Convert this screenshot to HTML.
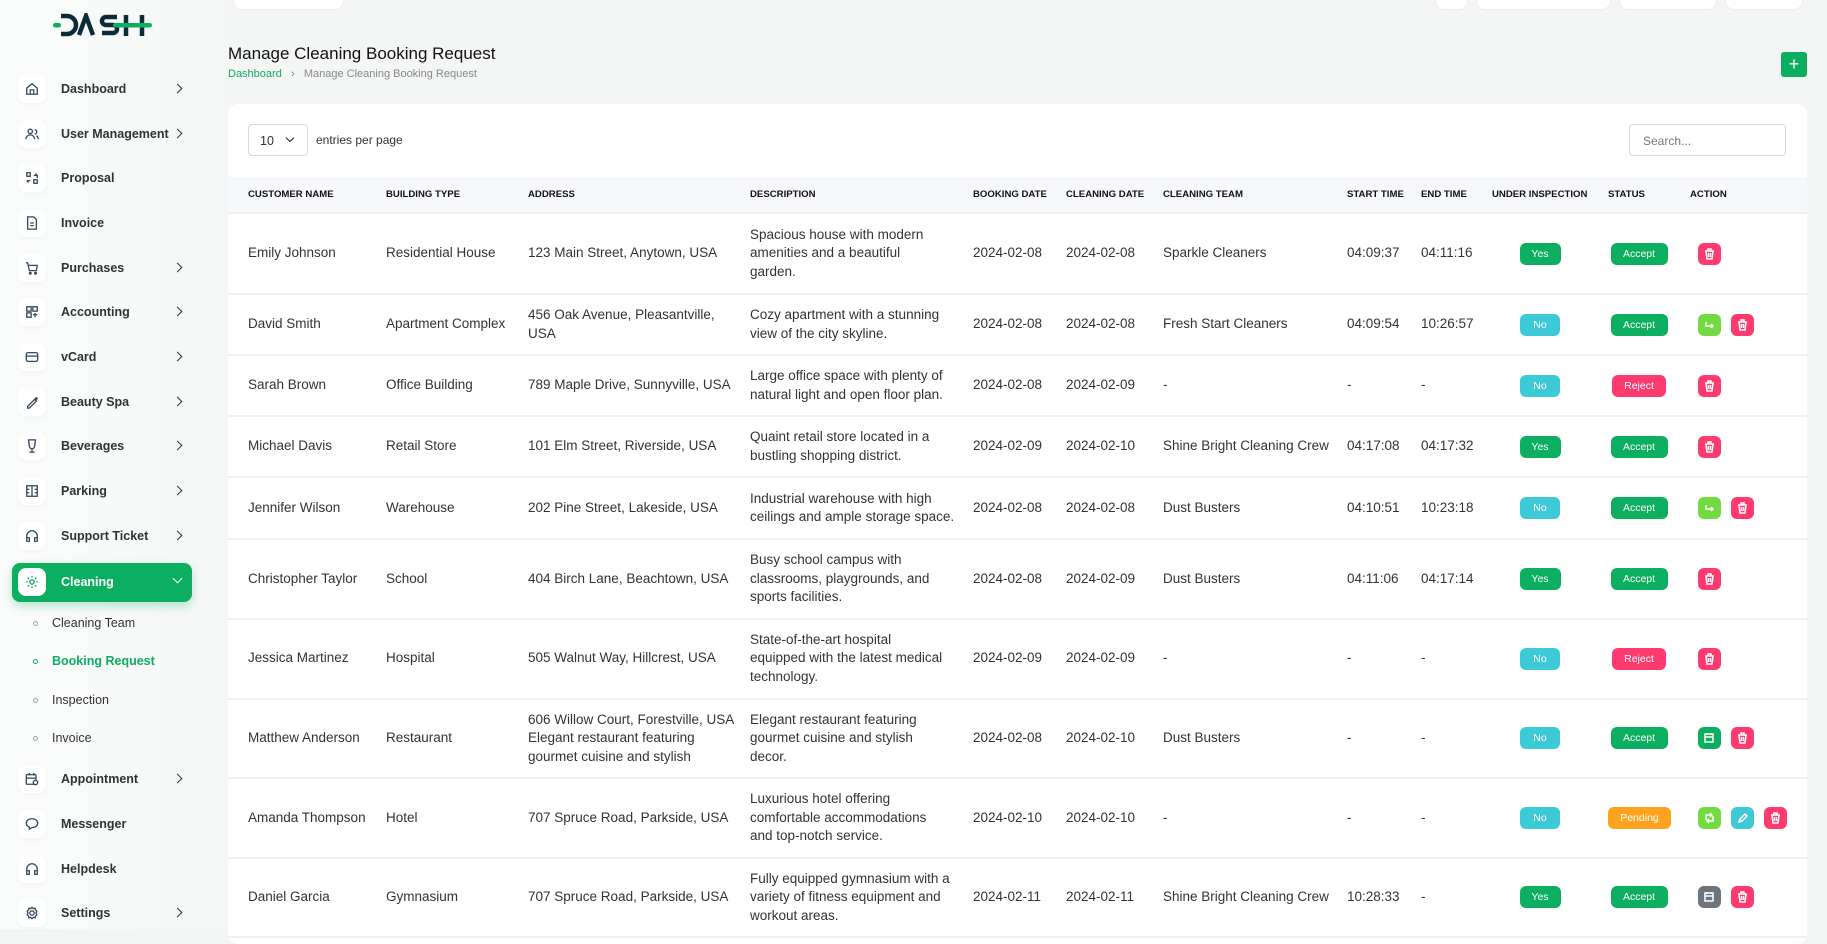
<!DOCTYPE html>
<html><head><meta charset="utf-8">
<style>
*{box-sizing:border-box;margin:0;padding:0}
body{width:1827px;height:929px;overflow:hidden;background:#f4f6f6;font-family:"Liberation Sans",sans-serif;color:#333;position:relative}
.sb{position:absolute;left:0;top:0;width:228px;height:929px;background:linear-gradient(90deg,#fbfcfc,#f5f7f7)}
.logo{position:absolute;left:52px;top:13px;width:100px;height:24px}
.it{position:absolute;left:18px;height:28px;display:flex;align-items:center;font-size:12.5px;font-weight:bold;color:#2d3436;width:170px}
.ib{width:28px;height:28px;background:#fff;border-radius:8px;display:flex;align-items:center;justify-content:center;box-shadow:0 2px 6px rgba(0,0,0,.03);margin-right:15px;flex:none}
.ib svg{width:14px;height:14px;fill:none;stroke:#34495e;stroke-width:1.5}
.chev{position:absolute;left:156px;top:10px;width:7px;height:7px;border-right:1.5px solid #333;border-top:1.5px solid #333;transform:rotate(45deg)}
.act{position:absolute;left:12px;top:563px;width:180px;height:39px;background:#0caf60;border-radius:8px;box-shadow:0 4px 10px rgba(12,175,96,.3)}
.sub{position:absolute;left:33px;font-size:12.5px;color:#333;display:flex;align-items:center}
.sub i{width:5px;height:5px;border:1.2px solid #9aa;border-radius:50%;margin-right:14px;display:inline-block}
.top{position:absolute;top:0;height:10px;background:#fff;border-radius:0 0 9px 9px;border:1px solid #eceeee;border-top:0}
h1{position:absolute;left:228px;top:44px;font-size:17px;font-weight:normal;color:#111}
.bc{position:absolute;left:228px;top:68px;font-size:11px;color:#888}
.bc span{color:#0caf60}
.plus{position:absolute;left:1781px;top:52px;width:26px;height:25px;background:#0caf60;border-radius:3px;color:#fff;text-align:center;font-size:18px;line-height:24px}
.card{position:absolute;left:228px;top:104px;width:1579px;height:840px;background:#fff;border-radius:10px}
.sel{position:absolute;left:20px;top:20px;width:60px;height:32px;border:1px solid #d5d8dc;border-radius:4px;font-size:12.5px;padding:9px 11px}
.sel:after{content:"";position:absolute;left:38px;top:10px;width:5px;height:5px;border-right:1.6px solid #222;border-bottom:1.6px solid #222;transform:rotate(45deg)}
.epp{position:absolute;left:88px;top:29px;font-size:12px;color:#333}
.srch{position:absolute;left:1401px;top:20px;width:157px;height:32px;border:1px solid #d5d8dc;border-radius:4px;font-size:12px;color:#777;padding:9px 13px}
table{position:absolute;left:0;top:73px;border-collapse:collapse;table-layout:fixed;width:1579px}
th{background:#f6f8fc;height:36px;font-size:9.6px;font-weight:bold;text-align:left;color:#111;padding:0 0 0 20px;white-space:nowrap;border-bottom:2px solid #eef0f2}
td{font-size:13.5px;line-height:18.5px;padding:11px 0 11px 20px;vertical-align:middle;border-bottom:2px solid #eef0f2;color:#333;white-space:nowrap;overflow:visible}
.c{text-align:center;padding-right:0}
.b{display:inline-block;height:22px;line-height:22px;border-radius:6px;color:#fff;font-size:10.5px;padding:0 6px}
.y{background:#0caf60;width:41px}.n{background:#3ec9d6;width:40px}
.ac{background:#0caf60;width:57px}.rj{background:#ff3a6e;width:54px}.pd{background:#ffa21d;width:63px}
.a{display:inline-block;width:23px;height:22px;border-radius:6px;margin-left:8px;margin-right:2px;vertical-align:middle;position:relative}
.a svg{position:absolute;left:6px;top:5px;width:11px;height:12px;fill:none;stroke:#fff;stroke-width:1.5}
.del{background:#ff3a6e}.sh{background:#72db41}.ed{background:#3ec9d6}.gr{background:#0caf60}.gy{background:#6c757d}
</style></head><body>
<div class="sb">
<svg class="logo" viewBox="0 0 100 24"><g fill="none" stroke="#0d2a38" stroke-width="4.5"><path d="M9 3h6a9 9 0 0 1 0 18H9"/><path d="M27 22l7-19 7 19"/><path d="M65 4H54a4 4 0 0 0 0 8h7a4 4 0 0 1 0 8H50"/><path d="M74 2v21M90 2v21"/></g><rect x="1" y="10" width="8" height="4.5" rx="2.2" fill="#0caf60"/><rect x="61" y="10" width="39" height="4.5" rx="2.2" fill="#0caf60"/></svg>

<div class="it" style="top:75px"><div class="ib"><svg viewBox="0 0 16 16"><path d="M2 7l6-5 6 5v7H2zM6 14v-5h4v5"/></svg></div>Dashboard<span class="chev"></span></div>
<div class="it" style="top:120px"><div class="ib"><svg viewBox="0 0 16 16"><circle cx="6" cy="5" r="2.5"/><path d="M1 14a5 5 0 0 1 10 0M11 3a2.5 2.5 0 0 1 0 5M13 10a4 4 0 0 1 2 4"/></svg></div>User Management<span class="chev"></span></div>
<div class="it" style="top:164px"><div class="ib"><svg viewBox="0 0 16 16"><rect x="2" y="2" width="4" height="4"/><rect x="10" y="10" width="4" height="4"/><path d="M10 5h4v3M2 11h4M12 3l2 2M4 13l-2-2"/></svg></div>Proposal</div>
<div class="it" style="top:209px"><div class="ib"><svg viewBox="0 0 16 16"><path d="M3 1h7l3 3v11H3zM6 8h4M6 11h4"/></svg></div>Invoice</div>
<div class="it" style="top:254px"><div class="ib"><svg viewBox="0 0 16 16"><path d="M1 2h2l2 9h8l1-6H4"/><circle cx="6" cy="14" r="1"/><circle cx="12" cy="14" r="1"/></svg></div>Purchases<span class="chev"></span></div>
<div class="it" style="top:298px"><div class="ib"><svg viewBox="0 0 16 16"><rect x="2" y="2" width="5" height="5"/><rect x="9" y="2" width="5" height="5"/><rect x="2" y="9" width="5" height="5"/><path d="M9 11h5M11.5 9v5"/></svg></div>Accounting<span class="chev"></span></div>
<div class="it" style="top:343px"><div class="ib"><svg viewBox="0 0 16 16"><rect x="1.5" y="3" width="13" height="10" rx="2"/><path d="M1.5 7h13"/></svg></div>vCard<span class="chev"></span></div>
<div class="it" style="top:388px"><div class="ib"><svg viewBox="0 0 16 16"><path d="M3 13l8-8 2 2-8 8H3zM11 5l2-2 1 1-2 2"/></svg></div>Beauty Spa<span class="chev"></span></div>
<div class="it" style="top:432px"><div class="ib"><svg viewBox="0 0 16 16"><path d="M4 1h8l-1 7a3 3 0 0 1-6 0zM8 11v4M5 15h6"/></svg></div>Beverages<span class="chev"></span></div>
<div class="it" style="top:477px"><div class="ib"><svg viewBox="0 0 16 16"><rect x="2" y="2" width="12" height="12"/><path d="M8 2v12M2 6h3M11 6h3M2 10h3M11 10h3"/></svg></div>Parking<span class="chev"></span></div>
<div class="it" style="top:522px"><div class="ib"><svg viewBox="0 0 16 16"><path d="M2 11V8a6 6 0 0 1 12 0v3M2 10h3v4H2zM11 10h3v4h-3z"/></svg></div>Support Ticket<span class="chev"></span></div>
<div class="act"></div>
<div class="it" style="top:568px;color:#fff"><div class="ib"><svg viewBox="0 0 16 16" style="stroke:#0caf60"><circle cx="8" cy="8" r="2.5"/><path d="M8 1v2M8 13v2M1 8h2M13 8h2M3 3l1.5 1.5M11.5 11.5L13 13M3 13l1.5-1.5M11.5 4.5L13 3"/></svg></div>Cleaning<span class="chev" style="border-color:#fff;transform:rotate(135deg);top:7px"></span></div>
<div class="sub" style="top:616px"><i></i>Cleaning Team</div>
<div class="sub" style="top:654px;color:#0caf60;font-weight:bold"><i style="border-color:#0caf60"></i>Booking Request</div>
<div class="sub" style="top:693px"><i></i>Inspection</div>
<div class="sub" style="top:731px"><i></i>Invoice</div>
<div class="it" style="top:765px"><div class="ib"><svg viewBox="0 0 16 16"><rect x="1.5" y="3" width="11" height="11" rx="1"/><path d="M1.5 7h11M5 1v3M10 1v3"/><circle cx="12" cy="12" r="2.5" fill="#fff"/></svg></div>Appointment<span class="chev"></span></div>
<div class="it" style="top:810px"><div class="ib"><svg viewBox="0 0 16 16"><path d="M8 2c4 0 6.5 2.2 6.5 5s-2.5 5-6.5 5l-3 2v-2.5C3 10.7 1.5 9 1.5 7 1.5 4.2 4 2 8 2z"/></svg></div>Messenger</div>
<div class="it" style="top:855px"><div class="ib"><svg viewBox="0 0 16 16"><path d="M2 11V8a6 6 0 0 1 12 0v3M2 10h3v4H2zM11 10h3v4h-3z"/></svg></div>Helpdesk</div>
<div class="it" style="top:899px"><div class="ib"><svg viewBox="0 0 16 16"><circle cx="8" cy="8" r="2.5"/><path d="M8 1.5l1.5 1.5 2-.5.5 2 1.5 1.5-1 2 1 2-1.5 1.5-.5 2-2-.5L8 14.5l-1.5-1.5-2 .5-.5-2L2.5 10l1-2-1-2L4 4.5l.5-2 2 .5z"/></svg></div>Settings<span class="chev"></span></div>
</div>

<div class="top" style="left:233px;width:111px"></div>
<div class="top" style="left:1435px;width:33px"></div>
<div class="top" style="left:1476px;width:135px"></div>
<div class="top" style="left:1619px;width:98px"></div>
<div class="top" style="left:1725px;width:78px"></div>

<h1>Manage Cleaning Booking Request</h1>
<div class="bc"><span>Dashboard</span> &nbsp;&nbsp;›&nbsp;&nbsp; Manage Cleaning Booking Request</div>
<div class="plus">+</div>

<div class="card">
<div class="sel">10</div><div class="epp">entries per page</div>
<div class="srch">Search...</div>
<table>
<colgroup><col style="width:138px"><col style="width:142px"><col style="width:222px"><col style="width:223px"><col style="width:93px"><col style="width:97px"><col style="width:184px"><col style="width:74px"><col style="width:71px"><col style="width:116px"><col style="width:82px"><col></colgroup>
<tr><th>CUSTOMER NAME</th><th>BUILDING TYPE</th><th>ADDRESS</th><th>DESCRIPTION</th><th>BOOKING DATE</th><th>CLEANING DATE</th><th>CLEANING TEAM</th><th>START TIME</th><th>END TIME</th><th>UNDER INSPECTION</th><th>STATUS</th><th>ACTION</th></tr>
<tr style="height:81px"><td>Emily Johnson</td><td>Residential House</td><td>123 Main Street, Anytown, USA</td><td>Spacious house with modern<br>amenities and a beautiful<br>garden.</td><td>2024-02-08</td><td>2024-02-08</td><td>Sparkle Cleaners</td><td>04:09:37</td><td>04:11:16</td><td class="c"><span class="b y">Yes</span></td><td class="c"><span class="b ac">Accept</span></td><td><span class="a del"><svg viewBox="0 0 11 12"><path d="M1 3h9M4 3V1h3v2M2 3l1 8h5l1-8M4.5 5v4M6.5 5v4"/></svg></span></td></tr>
<tr style="height:60px"><td>David Smith</td><td>Apartment Complex</td><td>456 Oak Avenue, Pleasantville,<br>USA</td><td>Cozy apartment with a stunning<br>view of the city skyline.</td><td>2024-02-08</td><td>2024-02-08</td><td>Fresh Start Cleaners</td><td>04:09:54</td><td>10:26:57</td><td class="c"><span class="b n">No</span></td><td class="c"><span class="b ac">Accept</span></td><td><span class="a sh"><svg viewBox="0 0 11 12"><path d="M2 3v4h7M7 5l2 2-2 2"/></svg></span><span class="a del"><svg viewBox="0 0 11 12"><path d="M1 3h9M4 3V1h3v2M2 3l1 8h5l1-8M4.5 5v4M6.5 5v4"/></svg></span></td></tr>
<tr style="height:61px"><td>Sarah Brown</td><td>Office Building</td><td>789 Maple Drive, Sunnyville, USA</td><td>Large office space with plenty of<br>natural light and open floor plan.</td><td>2024-02-08</td><td>2024-02-09</td><td>-</td><td>-</td><td>-</td><td class="c"><span class="b n">No</span></td><td class="c"><span class="b rj">Reject</span></td><td><span class="a del"><svg viewBox="0 0 11 12"><path d="M1 3h9M4 3V1h3v2M2 3l1 8h5l1-8M4.5 5v4M6.5 5v4"/></svg></span></td></tr>
<tr style="height:60px"><td>Michael Davis</td><td>Retail Store</td><td>101 Elm Street, Riverside, USA</td><td>Quaint retail store located in a<br>bustling shopping district.</td><td>2024-02-09</td><td>2024-02-10</td><td>Shine Bright Cleaning Crew</td><td>04:17:08</td><td>04:17:32</td><td class="c"><span class="b y">Yes</span></td><td class="c"><span class="b ac">Accept</span></td><td><span class="a del"><svg viewBox="0 0 11 12"><path d="M1 3h9M4 3V1h3v2M2 3l1 8h5l1-8M4.5 5v4M6.5 5v4"/></svg></span></td></tr>
<tr style="height:62px"><td>Jennifer Wilson</td><td>Warehouse</td><td>202 Pine Street, Lakeside, USA</td><td>Industrial warehouse with high<br>ceilings and ample storage space.</td><td>2024-02-08</td><td>2024-02-08</td><td>Dust Busters</td><td>04:10:51</td><td>10:23:18</td><td class="c"><span class="b n">No</span></td><td class="c"><span class="b ac">Accept</span></td><td><span class="a sh"><svg viewBox="0 0 11 12"><path d="M2 3v4h7M7 5l2 2-2 2"/></svg></span><span class="a del"><svg viewBox="0 0 11 12"><path d="M1 3h9M4 3V1h3v2M2 3l1 8h5l1-8M4.5 5v4M6.5 5v4"/></svg></span></td></tr>
<tr style="height:79px"><td>Christopher Taylor</td><td>School</td><td>404 Birch Lane, Beachtown, USA</td><td>Busy school campus with<br>classrooms, playgrounds, and<br>sports facilities.</td><td>2024-02-08</td><td>2024-02-09</td><td>Dust Busters</td><td>04:11:06</td><td>04:17:14</td><td class="c"><span class="b y">Yes</span></td><td class="c"><span class="b ac">Accept</span></td><td><span class="a del"><svg viewBox="0 0 11 12"><path d="M1 3h9M4 3V1h3v2M2 3l1 8h5l1-8M4.5 5v4M6.5 5v4"/></svg></span></td></tr>
<tr style="height:80px"><td>Jessica Martinez</td><td>Hospital</td><td>505 Walnut Way, Hillcrest, USA</td><td>State-of-the-art hospital<br>equipped with the latest medical<br>technology.</td><td>2024-02-09</td><td>2024-02-09</td><td>-</td><td>-</td><td>-</td><td class="c"><span class="b n">No</span></td><td class="c"><span class="b rj">Reject</span></td><td><span class="a del"><svg viewBox="0 0 11 12"><path d="M1 3h9M4 3V1h3v2M2 3l1 8h5l1-8M4.5 5v4M6.5 5v4"/></svg></span></td></tr>
<tr style="height:79px"><td>Matthew Anderson</td><td>Restaurant</td><td>606 Willow Court, Forestville, USA<br>Elegant restaurant featuring<br>gourmet cuisine and stylish</td><td>Elegant restaurant featuring<br>gourmet cuisine and stylish<br>decor.</td><td>2024-02-08</td><td>2024-02-10</td><td>Dust Busters</td><td>-</td><td>-</td><td class="c"><span class="b n">No</span></td><td class="c"><span class="b ac">Accept</span></td><td><span class="a gr"><svg viewBox="0 0 11 12"><rect x="1" y="2" width="8" height="8"/><path d="M1 5h8M3 1v2M7 1v2"/></svg></span><span class="a del"><svg viewBox="0 0 11 12"><path d="M1 3h9M4 3V1h3v2M2 3l1 8h5l1-8M4.5 5v4M6.5 5v4"/></svg></span></td></tr>
<tr style="height:79px"><td>Amanda Thompson</td><td>Hotel</td><td>707 Spruce Road, Parkside, USA</td><td>Luxurious hotel offering<br>comfortable accommodations<br>and top-notch service.</td><td>2024-02-10</td><td>2024-02-10</td><td>-</td><td>-</td><td>-</td><td class="c"><span class="b n">No</span></td><td class="c"><span class="b pd">Pending</span></td><td><span class="a sh"><svg viewBox="0 0 11 12"><path d="M2 8V3h6M6 1l2 2-2 2M9 4v5H3M5 11l-2-2 2-2"/></svg></span><span class="a ed"><svg viewBox="0 0 11 12"><path d="M2 10l1-3 5-5 2 2-5 5z"/></svg></span><span class="a del"><svg viewBox="0 0 11 12"><path d="M1 3h9M4 3V1h3v2M2 3l1 8h5l1-8M4.5 5v4M6.5 5v4"/></svg></span></td></tr>
<tr style="height:78px"><td>Daniel Garcia</td><td>Gymnasium</td><td>707 Spruce Road, Parkside, USA</td><td>Fully equipped gymnasium with a<br>variety of fitness equipment and<br>workout areas.</td><td>2024-02-11</td><td>2024-02-11</td><td>Shine Bright Cleaning Crew</td><td>10:28:33</td><td>-</td><td class="c"><span class="b y">Yes</span></td><td class="c"><span class="b ac">Accept</span></td><td><span class="a gy"><svg viewBox="0 0 11 12"><rect x="1" y="2" width="8" height="8"/><path d="M1 5h8M3 1v2M7 1v2"/></svg></span><span class="a del"><svg viewBox="0 0 11 12"><path d="M1 3h9M4 3V1h3v2M2 3l1 8h5l1-8M4.5 5v4M6.5 5v4"/></svg></span></td></tr>
</table>
</div>
</body></html>
